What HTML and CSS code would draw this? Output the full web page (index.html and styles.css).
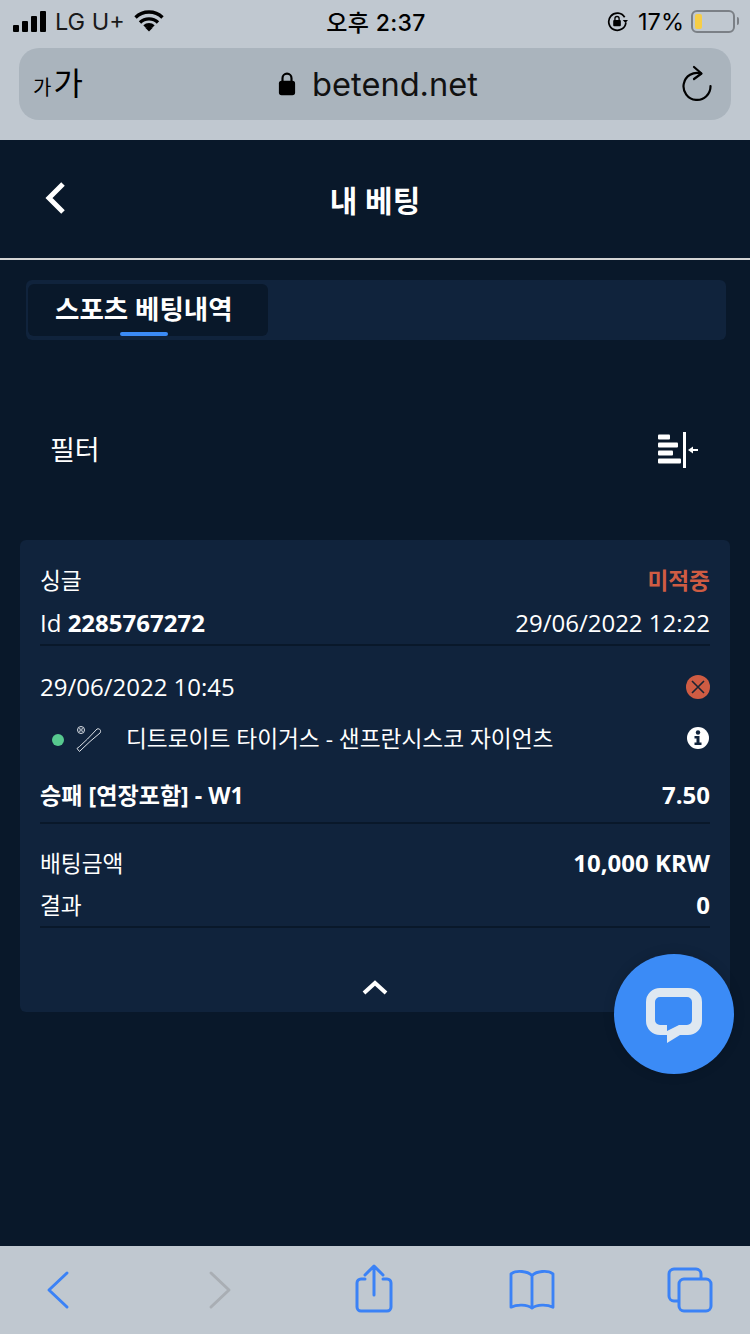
FILE: index.html
```html
<!DOCTYPE html>
<html lang="ko">
<head>
    <meta charset="UTF-8">
    <meta name="viewport" content="width=device-width, initial-scale=1.0">
    <title>내 베팅</title>
    <link rel="stylesheet" href="styles.css">
</head>
<body>
<div class="screen">
    <div class="browser-top">
        <div class="status">
            <div class="status-left">
                <div class="signal"><i></i><i></i><i></i><i></i></div>
                <span>LG U+</span>
                <svg width="30" height="22" viewBox="0 0 30 22"><path d="M1.500 7.500a19.500 19.500 0 0 1 27 0M6 12.500a13 13 0 0 1 18 0M10.500 16.500a6.500 6.500 0 0 1 9 0" fill="none" stroke="#000" stroke-width="3.400"/><path d="M11.500 18 15 14.800 18.500 18 15 21.500z" fill="#000"/></svg>
            </div>
            <div class="status-time">오후 2:37</div>
            <div class="status-right">
                <svg width="21" height="21" viewBox="0 0 22 22"><path d="M18.500 6.500A9 9 0 1 0 19.800 12" fill="none" stroke="#000" stroke-width="1.800"/><path d="M16.500 9.500h5.500l-2.700 3.200z" fill="#000"/><rect x="6.500" y="9.500" width="8" height="6.500" rx="1" fill="#000"/><path d="M8.300 10V8a2.200 2.200 0 0 1 4.400 0v2" fill="none" stroke="#000" stroke-width="1.400"/></svg>
                <span>17%</span>
                <div class="battery"><div class="battery-level"></div></div>
                <div class="battery-cap"></div>
            </div>
        </div>
        <div class="urlbar">
            <div class="aa"><small>가</small>가</div>
            <div class="url">
                <svg width="18" height="26" viewBox="0 0 20 27"><rect x="1" y="10" width="18" height="16" rx="3" fill="#000"/><path d="M5 11V7a5 5 0 0 1 10 0v4" fill="none" stroke="#000" stroke-width="2.400"/></svg>
                <span>betend.net</span>
            </div>
            <svg class="reload" width="32" height="36" viewBox="0 0 32 36"><path d="M20 8.500A13.500 13.500 0 1 0 29.500 21" fill="none" stroke="#000" stroke-width="2.200" stroke-linecap="round"/><path d="M13 2l7.500 6.500L13 14" fill="none" stroke="#000" stroke-width="2.200" stroke-linecap="round" stroke-linejoin="round"/></svg>
        </div>
    </div>

    <div class="content">
        <div class="header">
            <svg class="back" width="24" height="36" viewBox="0 0 24 36"><path d="M20 4 6 18l14 14" fill="none" stroke="#fff" stroke-width="5"/></svg>
            <h1>내 베팅</h1>
        </div>

        <div class="tabs">
            <div class="tab">스포츠 베팅내역</div>
        </div>

        <div class="filter">
            <span>필터</span>
            <svg width="40" height="36" viewBox="0 0 40 36"><g fill="#fff"><rect x="0" y="2.500" width="12" height="5" rx="1"/><rect x="0" y="10.500" width="20" height="5" rx="1"/><rect x="0" y="18.500" width="15" height="5" rx="1"/><rect x="0" y="26.500" width="23" height="5" rx="1"/><rect x="25" y="0" width="3" height="36"/><rect x="33" y="17" width="7" height="2"/><path d="M30 18l5-3.500v7z"/></g></svg>
        </div>

        <div class="card">
            <div class="row row-top">
                <span class="ko">싱글</span>
                <span class="lost">미적중</span>
            </div>
            <div class="row row-id line">
                <span>Id <b>2285767272</b></span>
                <span>29/06/2022 12:22</span>
            </div>
            <div class="row row-date">
                <span>29/06/2022 10:45</span>
                <svg width="24" height="24" viewBox="0 0 24 24"><circle cx="12" cy="12" r="12" fill="#cf5c43"/><path d="M6 6l12 12M18 6 6 18" stroke="#1a2433" stroke-width="1.600"/></svg>
            </div>
            <div class="row row-match">
                <div class="match-name">
                    <i class="live-dot"></i>
                    <svg class="sport" width="26" height="26" viewBox="0 0 26 26"><g fill="none" stroke="#dde2e8" stroke-width="1"><circle cx="5" cy="4" r="3.500"/><path d="M3.500 2c1 1.200 1 2.800 0 4M6.500 2c-1 1.200-1 2.800 0 4"/><path d="M1 22.500l2.500 3 1.500-1.500 9-8.500 10-8.500c1.500-2 0-5-3-4L11.500 13l-8 7.500z"/></g></svg>
                    <span>디트로이트 타이거스 - 샌프란시스코 자이언츠</span>
                </div>
                <svg class="info" width="22" height="22" viewBox="0 0 22 22"><circle cx="11" cy="11" r="11" fill="#fff"/><circle cx="11" cy="5.500" r="2.200" fill="#10233c"/><path d="M7.500 9h5v6.500h2V18h-7v-2.500h2V11.500h-2z" fill="#10233c"/></svg>
            </div>
            <div class="row row-market line">
                <b>승패 [연장포함] - W1</b>
                <b class="odds">7.50</b>
            </div>
            <div class="row row-stake">
                <span class="ko">배팅금액</span>
                <b>10,000 KRW</b>
            </div>
            <div class="row row-result line">
                <span class="ko">결과</span>
                <b>0</b>
            </div>
            <div class="collapse">
                <svg width="28" height="18" viewBox="0 0 28 18"><path d="M3 15 14 5l11 10" fill="none" stroke="#fff" stroke-width="4"/></svg>
            </div>
        </div>

        <div class="chat">
            <svg width="56" height="56" viewBox="0 0 56 56"><path fill-rule="evenodd" d="M14 0H42a14 14 0 0 1 14 14V33a14 14 0 0 1-14 14H34L21 55V47H14A14 14 0 0 1 0 33V14A14 14 0 0 1 14 0zM14 9a5 5 0 0 0-5 5V32a5 5 0 0 0 5 5H21V43L33 37H41a5 5 0 0 0 5-5V14a5 5 0 0 0-5-5z" fill="#dfe8f1"/></svg>
        </div>
    </div>

    <div class="toolbar">
        <div class="tool"><svg width="26" height="40" viewBox="0 0 26 40"><path d="M22 3 4 20l18 17" fill="none" stroke="#3b82f6" stroke-width="3" stroke-linecap="round" stroke-linejoin="round"/></svg></div>
        <div class="tool tool-forward"><svg width="26" height="40" viewBox="0 0 26 40"><path d="M4 3l18 17L4 37" fill="none" stroke="#a9aeb4" stroke-width="3" stroke-linecap="round" stroke-linejoin="round"/></svg></div>
        <div class="tool tool-share"><svg width="40" height="50" viewBox="0 0 40 50"><path d="M11 15H7a4 4 0 0 0-4 4v24a4 4 0 0 0 4 4h26a4 4 0 0 0 4-4V19a4 4 0 0 0-4-4h-4M20 31V3M11 11l9-9 9 9" fill="none" stroke="#3b82f6" stroke-width="3" stroke-linecap="round" stroke-linejoin="round"/></svg></div>
        <div class="tool"><svg width="48" height="42" viewBox="0 0 50 44"><path d="M25 7C21 2 8 1 3 5v35c6-3 17-3 22 1 5-4 16-4 22-1V5c-5-4-18-3-22 2zM25 7v34" fill="none" stroke="#3b82f6" stroke-width="3" stroke-linecap="round" stroke-linejoin="round"/></svg></div>
        <div class="tool"><svg width="46" height="46" viewBox="0 0 46 46"><rect x="12" y="12" width="32" height="32" rx="5" fill="none" stroke="#3b82f6" stroke-width="3"/><path d="M12 34H7a5 5 0 0 1-5-5V7a5 5 0 0 1 5-5h22a5 5 0 0 1 5 5v5" fill="none" stroke="#3b82f6" stroke-width="3"/></svg></div>
    </div>
</div>
</body>
</html>
```

FILE: styles.css
```css
* {
    box-sizing: border-box;
}
html, body {
    margin: 0;
    padding: 0;
}
body {
    font-family: "Open Sans", "Noto Sans CJK KR", sans-serif;
    background-color: #09182a;
}
svg {
    display: block;
    flex-shrink: 0;
}
.screen {
    position: relative;
    width: 750px;
    height: 1334px;
    display: flex;
    flex-direction: column;
    overflow: hidden;
}

/* browser chrome */
.browser-top {
    height: 140px;
    background-color: #c0c8d0;
    font-family: Inter, "Noto Sans CJK KR", sans-serif;
    color: #000;
}
.status {
    height: 42px;
    margin-bottom: 6px;
    padding: 0 11px 0 13px;
    display: grid;
    grid-template-columns: 1fr auto 1fr;
    align-items: center;
    font-size: 23.500px;
}
.status-left {
    display: flex;
    align-items: center;
    gap: 9px;
    color: #1a1a1a;
}
.signal {
    display: flex;
    align-items: flex-end;
    gap: 3px;
    height: 21px;
}
.signal i {
    width: 6px;
    background-color: #000;
    border-radius: 1px;
}
.signal i:nth-child(1) { height: 7px; }
.signal i:nth-child(2) { height: 11px; }
.signal i:nth-child(3) { height: 16px; }
.signal i:nth-child(4) { height: 21px; }
.status-time {
    font-size: 23px;
    font-weight: 500;
    letter-spacing: 0.3px;
}
.status-right {
    display: flex;
    align-items: center;
    justify-content: flex-end;
}
.status-right span {
    margin: 0 7px 0 10px;
}
.battery {
    width: 44px;
    height: 23px;
    border: 2px solid #7b8086;
    border-radius: 6px;
    padding: 2px;
}
.battery-level {
    width: 7px;
    height: 15px;
    background-color: #f7ce46;
    border-radius: 2px;
}
.battery-cap {
    width: 2px;
    height: 8px;
    margin-left: 2px;
    background-color: #7b8086;
    border-radius: 0 2px 2px 0;
}
.urlbar {
    margin: 0 19px;
    height: 72px;
    background-color: #aab4bd;
    border-radius: 20px;
    display: flex;
    align-items: center;
    justify-content: space-between;
    padding: 0 18px 0 14px;
}
.aa {
    font-size: 32px;
    line-height: 1;
    width: 42px;
    white-space: nowrap;
}
.aa small {
    font-size: 20px;
    margin-right: 2px;
}
.url {
    display: flex;
    align-items: center;
    gap: 16px;
    font-size: 32.600px;
    color: #111;
}
.reload {
    margin-top: -2px;
}

/* page */
.content {
    position: relative;
    flex: 1;
    background-color: #09182a;
}
.header {
    position: relative;
    height: 120px;
    border-bottom: 2px solid #d4d4d4;
    display: flex;
    align-items: center;
    justify-content: center;
}
.header h1 {
    margin: 0;
    font-size: 30px;
    font-weight: 700;
    color: #fff;
}
.back {
    position: absolute;
    left: 43px;
    top: 40px;
}
.tabs {
    margin: 20px 24px 0 26px;
    height: 60px;
    padding: 4px 2px;
    background-color: #10233c;
    border-radius: 6px;
}
.tab {
    position: relative;
    width: 240px;
    height: 52px;
    padding-left: 27px;
    background-color: #09182a;
    border-radius: 6px;
    font-size: 26.500px;
    font-weight: 700;
    line-height: 50px;
    color: #fff;
}
.tab::after {
    content: "";
    position: absolute;
    left: 92px;
    bottom: 0;
    width: 48px;
    height: 4px;
    border-radius: 2px;
    background-color: #3b8bf6;
}
.filter {
    height: 200px;
    padding: 20px 52px 0 50px;
    display: flex;
    align-items: center;
    justify-content: space-between;
    font-size: 27px;
    color: #fff;
}
.filter span {
    margin-top: -4px;
}
.card {
    margin: 0 20px;
    height: 472px;
    padding: 0 20px;
    background-color: #10233c;
    border-radius: 6px;
    color: #fff;
    font-size: 24px;
}
.row {
    display: flex;
    align-items: center;
    justify-content: space-between;
}
.row b {
    font-weight: 700;
}
.line {
    border-bottom: 2px solid #09182a;
}
.ko {
    font-size: 22.700px;
}
.row-top {
    height: 62px;
    padding-top: 17px;
}
.lost {
    color: #cf5c43;
    font-weight: 700;
    font-size: 22.700px;
}
.row-id {
    height: 44px;
    padding-bottom: 2px;
}
.row-date {
    height: 81px;
}
.row-match {
    height: 20px;
}
.info {
    margin-right: 1px;
    margin-top: 2px;
}
.match-name {
    display: flex;
    align-items: center;
    font-size: 22.700px;
    padding-left: 12px;
}
.live-dot {
    width: 12px;
    height: 12px;
    border-radius: 50%;
    background-color: #57c98f;
    margin-right: 12px;
    margin-top: 6px;
}
.sport {
    margin-right: 24px;
    margin-top: 4px;
}
.row-market {
    height: 77px;
    padding-top: 19px;
}
.row-market b {
    font-size: 23.100px;
}
.row-market .odds {
    font-size: 24px;
}
.row-stake {
    height: 60px;
    padding-top: 16px;
}
.row-result {
    height: 44px;
    padding-bottom: 2px;
}
.collapse {
    display: flex;
    justify-content: center;
    padding-top: 50px;
}
.chat {
    position: absolute;
    left: 614px;
    top: 814px;
    width: 120px;
    height: 120px;
    padding-top: 4px;
    border-radius: 50%;
    background-color: #3b8bf6;
    display: flex;
    align-items: center;
    justify-content: center;
    box-shadow: 0 0 12px rgba(0,0,0,0.15);
}
.toolbar {
    height: 88px;
    background-color: #c0c8d0;
    padding: 0 37px 0 35px;
    display: flex;
    align-items: center;
    justify-content: space-between;
}
.tool {
    width: 46px;
    display: flex;
    justify-content: center;
}
.tool-forward {
    padding-left: 8px;
}
.tool-share {
    margin-top: -3px;
}
```
